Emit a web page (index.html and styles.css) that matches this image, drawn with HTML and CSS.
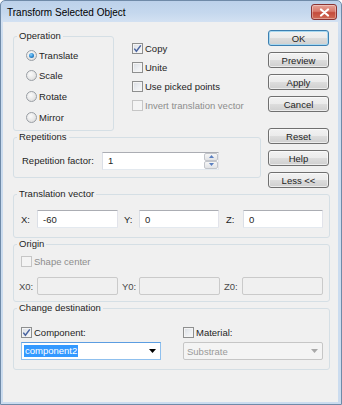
FILE: index.html
```html
<!DOCTYPE html>
<html>
<head>
<meta charset="utf-8">
<link rel="stylesheet" href="styles.css">
</head>
<body>
<div class="window">
  <div class="titlebar">
    <span class="title">Transform Selected Object</span>
    <span class="close"><svg width="11" height="9" viewBox="0 0 11 9"><path d="M2 1.5 L9 7.5 M9 1.5 L2 7.5" stroke="#fff" stroke-width="2.2" stroke-linecap="round" fill="none"/></svg></span>
  </div>
  <div class="client">
    <div class="top">
      <div class="left">
        <div class="op-row">
          <fieldset class="group op">
            <legend>Operation</legend>
            <div class="op-body">
              <div class="radio"><span class="rb on"></span>Translate</div>
              <div class="radio"><span class="rb"></span>Scale</div>
              <div class="radio"><span class="rb"></span>Rotate</div>
              <div class="radio"><span class="rb"></span>Mirror</div>
            </div>
          </fieldset>
          <div class="checks">
            <div class="cb-row"><span class="cb"><svg width="9" height="9" viewBox="0 0 9 9"><path d="M1.3 4.6 L3.4 7.2 L7.8 1.4" stroke="#4a64a0" stroke-width="1.5" fill="none"/></svg></span>Copy</div>
            <div class="cb-row"><span class="cb"></span>Unite</div>
            <div class="cb-row"><span class="cb"></span>Use picked points</div>
            <div class="cb-row disabled"><span class="cb"></span>Invert translation vector</div>
          </div>
        </div>
        <fieldset class="group rep">
          <legend>Repetitions</legend>
          <div class="rep-body">
            <span class="rep-label">Repetition factor:</span>
            <div class="spin">
              <span class="spin-val">1</span>
              <span class="spin-btns">
                <span class="sb"><svg width="5" height="3" viewBox="0 0 5 3"><path d="M0 3 L2.5 0 L5 3 Z" fill="#5a7fc0"/></svg></span>
                <span class="sb"><svg width="5" height="3" viewBox="0 0 5 3"><path d="M0 0 L2.5 3 L5 0 Z" fill="#5a7fc0"/></svg></span>
              </span>
            </div>
          </div>
        </fieldset>
      </div>
      <div class="buttons">
        <div class="btn default">OK</div>
        <div class="btn">Preview</div>
        <div class="btn">Apply</div>
        <div class="btn">Cancel</div>
        <div class="btn sep">Reset</div>
        <div class="btn">Help</div>
        <div class="btn">Less &lt;&lt;</div>
      </div>
    </div>

    <fieldset class="group vec">
      <legend>Translation vector</legend>
      <div class="vec-body">
        <span class="lbl l-x">X:</span><span class="field w81">-60</span>
        <span class="lbl l-y">Y:</span><span class="field w80">0</span>
        <span class="lbl l-z">Z:</span><span class="field w80">0</span>
      </div>
    </fieldset>

    <fieldset class="group origin">
      <legend>Origin</legend>
      <div class="origin-body">
        <div class="cb-row disabled shape"><span class="cb"></span>Shape center</div>
        <div class="origin-row">
          <span class="lbl o-x">X0:</span><span class="field off w81"></span>
          <span class="lbl o-y">Y0:</span><span class="field off w81"></span>
          <span class="lbl o-z">Z0:</span><span class="field off w81"></span>
        </div>
      </div>
    </fieldset>

    <fieldset class="group dest">
      <legend>Change destination</legend>
      <div class="dest-body">
        <div class="dest-col">
          <div class="cb-row big"><span class="cb"><svg width="9" height="9" viewBox="0 0 9 9"><path d="M1.3 4.6 L3.4 7.2 L7.8 1.4" stroke="#4a64a0" stroke-width="1.5" fill="none"/></svg></span>Component:</div>
          <div class="combo focus"><span class="sel">component2</span><svg class="arrow" width="7" height="4" viewBox="0 0 7 4"><path d="M0 0 L7 0 L3.5 4 Z" fill="#000"/></svg></div>
        </div>
        <div class="dest-col">
          <div class="cb-row big"><span class="cb"></span>Material:</div>
          <div class="combo off"><span class="val">Substrate</span><svg class="arrow" width="7" height="4" viewBox="0 0 7 4"><path d="M0 0 L7 0 L3.5 4 Z" fill="#a8a8a8"/></svg></div>
        </div>
      </div>
    </fieldset>
  </div>
</div>
</body>
</html>
```

FILE: styles.css
```css
* { box-sizing: border-box; }
html, body { margin: 0; padding: 0; }
body {
  width: 342px;
  height: 405px;
  overflow: hidden;
  background: #fff;
  font-family: "Liberation Sans", Arial, sans-serif;
  font-size: 9.5px;
  color: #1e1e1e;
}

.window {
  width: 342px;
  height: 405px;
  display: flex;
  flex-direction: column;
  border: 1px solid #6f8aa8;
  border-radius: 5px 5px 0 0;
  background: linear-gradient(#bcd1ea 0, #c5d8ee 12px, #d3e1f2 21px, #cbdcef 40px, #cbdcef 100%);
}

.titlebar {
  height: 21px;
  flex: none;
  display: flex;
  align-items: center;
  justify-content: space-between;
  padding: 0 4px 0 6px;
}
.title {
  font-size: 10px;
  color: #000;
  margin-top: 1px;
}
.close {
  width: 26px;
  height: 16px;
  margin-top: 1px;
  border: 1px solid #8a3333;
  border-radius: 3px;
  background: linear-gradient(#e4a095 0, #d97a6c 45%, #c44b3c 55%, #d06a55 100%);
  display: flex;
  align-items: center;
  justify-content: center;
  box-shadow: inset 0 0 0 1px rgba(255,255,255,0.35);
}

.client {
  flex: 1;
  margin: 0 3px 2px 2px;
  background: #f0f0f0;
  padding: 8px 0 0 10px;
}

.top { display: flex; }
.left { width: 248px; }

.op-row { display: flex; }

fieldset.group {
  margin: 0;
  padding: 0;
  min-width: 0;
  border: 1px solid #d5dfe5;
  border-radius: 3px;
}
legend {
  margin-left: 3px;
  padding: 0 2px;
  height: 12px;
  line-height: 12px;
}

.op { width: 101px; margin-top: 1px; }
.op-body { padding: 3px 0 2.5px 12px; }
.radio {
  display: flex;
  align-items: center;
  height: 20.66px;
}
.rb {
  width: 11px;
  height: 11px;
  margin-right: 2px;
  border-radius: 50%;
  border: 1px solid #9a9fa5;
  background: radial-gradient(circle at 40% 35%, #fafafa 0, #e8e8e8 55%, #d4d4d4 100%);
  display: flex;
  align-items: center;
  justify-content: center;
}
.rb.on::after {
  content: "";
  width: 5px;
  height: 5px;
  border-radius: 50%;
  background: radial-gradient(circle at 40% 35%, #8fd3ff 0, #2f8ed6 50%, #15508c 100%);
}

.checks {
  margin-left: 18px;
  padding-top: 8.5px;
}
.cb-row {
  display: flex;
  align-items: center;
  height: 19px;
}
.cb {
  width: 11px;
  height: 11px;
  margin-right: 2px;
  border: 1px solid #8e8f8f;
  background: linear-gradient(135deg, #d9dde3 0, #eef0f3 60%, #f7f7f7 100%);
  box-shadow: inset 0 0 0 1px #f4f4f4;
  display: flex;
  align-items: center;
  justify-content: center;
  flex: none;
}
.cb-row.disabled { color: #8d8d8d; }
.cb-row.disabled .cb {
  border-color: #c6c6c6;
  background: #f4f4f4;
  box-shadow: none;
}

.rep { margin-top: 10px; width: 248px; }
.rep-body {
  display: flex;
  align-items: center;
  padding: 8.5px 0 7px 8px;
}
.rep-label { width: 80px; }
.spin {
  width: 117px;
  height: 18px;
  display: flex;
  align-items: center;
  justify-content: space-between;
  background: #fff;
  border: 1px solid;
  border-color: #abadb3 #e2e3ea #e3e9ef #dbdfe6;
}
.spin-val { padding-left: 5px; }
.spin-btns {
  display: flex;
  flex-direction: column;
  width: 14px;
  height: 16px;
}
.sb {
  flex: 1;
  display: flex;
  align-items: center;
  justify-content: center;
  border: 1px solid #c2c5cb;
  border-radius: 2px;
  background: linear-gradient(#f6f6f6, #e1e3e6);
}

.buttons {
  width: 61px;
  margin-left: 7px;
  display: flex;
  flex-direction: column;
  gap: 6px;
}
.btn {
  height: 16px;
  display: flex;
  align-items: center;
  justify-content: center;
  border: 1px solid #707070;
  border-radius: 3px;
  background: linear-gradient(#f2f2f2 0, #ebebeb 50%, #dddddd 51%, #cfcfcf 100%);
  box-shadow: inset 0 0 0 1px rgba(255,255,255,0.6);
}
.btn.default {
  border-color: #3c7fb1;
  box-shadow: inset 0 0 0 1px #a8d8f0;
}
.btn.sep { margin-top: 10px; }

.vec { margin-top: 9px; width: 317px; }
.vec-body {
  display: flex;
  align-items: center;
  padding: 10px 0 9px 7px;
}
.lbl { flex: none; }
.l-x { width: 16px; }
.l-y { width: 15px; margin-left: 6px; }
.l-z { width: 17px; margin-left: 7px; }
.field {
  height: 18px;
  display: flex;
  align-items: center;
  padding-left: 5px;
  background: #fff;
  border: 1px solid;
  border-color: #abadb3 #e2e3ea #e3e9ef #dbdfe6;
  border-radius: 1px;
  flex: none;
}
.w81 { width: 81px; }
.w80 { width: 80px; }
.field.off {
  background: #f0f0f0;
  border: 1px solid #cacaca;
  border-radius: 2px;
}

.origin { margin-top: 7px; width: 317px; }
.origin-body { padding: 4.5px 0 6px 5px; }
.cb-row.shape { height: 13px; margin-left: 2px; }
.origin-row {
  display: flex;
  align-items: center;
  margin-top: 9.5px;
  color: #4a4a4a;
}
.o-x { width: 18px; }
.o-y { width: 17px; margin-left: 4px; }
.o-z { width: 18px; margin-left: 4px; }

.dest { margin-top: 8px; width: 317px; }
.dest-body {
  display: flex;
  gap: 22px;
  padding: 11.5px 0 9px 7px;
}
.dest-col { width: 140px; }
.cb-row.big { height: 13px; }
.combo {
  margin-top: 3.5px;
  height: 18px;
  display: flex;
  align-items: center;
  justify-content: space-between;
  padding: 0 4px 0 2px;
  border: 1px solid;
}
.combo.focus {
  background: #fff;
  border-color: #5b9de1 #8fc0ee #8fc0ee #8fc0ee;
}
.combo .sel {
  background: #3399ff;
  color: #fff;
  padding: 0 1px;
  height: 12px;
  line-height: 12px;
}
.combo.off {
  background: #f4f4f4;
  border-color: #c6c6c6;
  border-radius: 2px;
  color: #9a9a9a;
}
.combo .val { padding-left: 1px; }
.arrow { flex: none; }
```
